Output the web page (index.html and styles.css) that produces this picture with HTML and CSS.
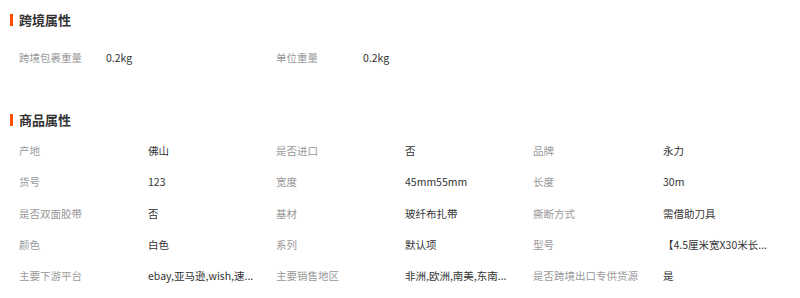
FILE: index.html
```html
<!DOCTYPE html>
<html lang="zh-CN">
<head>
<meta charset="utf-8">
<title>属性</title>
<link rel="stylesheet" href="styles.css">
</head>
<body>
<div class="page">
  <section class="block block-cross">
    <h2 class="title">跨境属性</h2>
    <div class="grid grid-cross">
      <span class="label">跨境包裹重量</span><span class="value">0.2kg</span>
      <span class="label">单位重量</span><span class="value">0.2kg</span>
    </div>
  </section>
  <section class="block block-goods">
    <h2 class="title">商品属性</h2>
    <div class="grid grid-goods">
      <span class="label">产地</span><span class="value">佛山</span>
      <span class="label">是否进口</span><span class="value">否</span>
      <span class="label">品牌</span><span class="value">永力</span>

      <span class="label">货号</span><span class="value">123</span>
      <span class="label">宽度</span><span class="value">45mm55mm</span>
      <span class="label">长度</span><span class="value">30m</span>

      <span class="label">是否双面胶带</span><span class="value">否</span>
      <span class="label">基材</span><span class="value">玻纤布扎带</span>
      <span class="label">撕断方式</span><span class="value">需借助刀具</span>

      <span class="label">颜色</span><span class="value">白色</span>
      <span class="label">系列</span><span class="value">默认项</span>
      <span class="label">型号</span><span class="value">【4.5厘米宽X30米长...</span>

      <span class="label">主要下游平台</span><span class="value">ebay,亚马逊,wish,速...</span>
      <span class="label">主要销售地区</span><span class="value">非洲,欧洲,南美,东南...</span>
      <span class="label">是否跨境出口专供货源</span><span class="value">是</span>
    </div>
  </section>
</div>
</body>
</html>
```

FILE: styles.css
```css
* { box-sizing: border-box; }
html, body { margin: 0; padding: 0; background: #fff; }
body {
  font-family: "Noto Sans CJK SC", "Noto Sans", sans-serif;
  font-size: 10.5px;
  color: #333;
}
.page { padding: 8px 0 0 10px; }
.title {
  margin: 0;
  height: 24px;
  line-height: 24px;
  font-size: 13px;
  font-weight: bold;
  color: #333;
  display: flex;
  align-items: center;
  gap: 6px;
}
.title::before {
  content: "";
  display: block;
  width: 3px;
  height: 12px;
  background: #ff5000;
}
.grid {
  display: grid;
  padding-left: 9px;
  grid-auto-rows: 31px;
  align-items: center;
}
.grid-cross {
  margin-top: 10px;
  grid-template-columns: 87px 170px 87px 170px;
}
.block-goods { margin-top: 35px; }
.grid-goods {
  margin-top: 3px;
  grid-template-columns: 129px 128px 129px 128px 130px 128px;
  grid-auto-rows: 31.25px;
}
.label { color: #999; white-space: nowrap; }
.value {
  color: #333;
  white-space: nowrap;
}
```
